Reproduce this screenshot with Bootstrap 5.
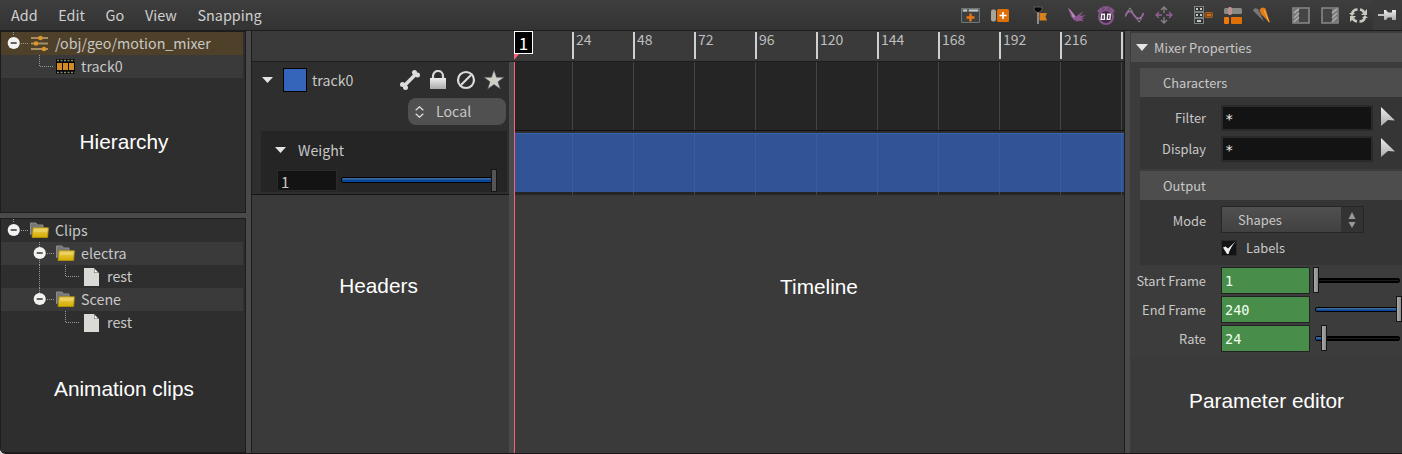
<!DOCTYPE html>
<html lang="en">
<head>
<meta charset="utf-8">
<meta name="viewport" content="width=device-width, initial-scale=1">
<title>Motion Mixer</title>
<link href="https://cdn.jsdelivr.net/npm/bootstrap@5.3.0/dist/css/bootstrap.min.css" rel="stylesheet">
<style>
html,body{height:100%}
body{background:#d8d8d8;color:#c8c8c8;font-family:"Noto Sans CJK SC","Noto Sans",sans-serif;font-size:14px;line-height:23px;overflow:hidden}
main{background:#3a3a3a;border-radius:0 0 0 6px;border-bottom:1px solid #1c1519;overflow:hidden}
svg{display:block;flex:none}
.topbar{height:31px;background:linear-gradient(#3e3e3e,#333);border-bottom:1px solid #1d1d1d;font-size:14.4px;line-height:30px}
.topbar .item{color:#d0d0d0;margin-right:20.7px;white-space:nowrap}
.tool{width:29px;height:30px;display:flex;align-items:center;justify-content:center;flex:none}
.pinned{background:#3b3b3b}
.leftcol{width:246px;flex:none;background:#4a4a4a}
.pane{background:#2e2e2e;border:1px solid #1d1d1d}
.pane-a{height:182px;padding-right:2px}
.pane-b{margin-top:5px;padding-right:2px}
.tree{height:23px;display:flex;align-items:center;font-size:14.3px;white-space:nowrap}
.tree span{line-height:21px;height:23px}
.sel{background:#4f4129}
.alt{background:#3a3a3a}
.split{width:5px;background:#4a4a4a;flex:none}
.caption{font-family:"Liberation Sans",Arial,sans-serif;font-size:20.8px;line-height:24px;color:#fff;text-align:center;white-space:nowrap}
.mid{width:874px;flex:none;border-left:1px solid #1d1d1d;border-right:1px solid #1d1d1d}
.ruler{height:31px;border-bottom:1px solid #1d1d1d;padding:1px 0 0 320px;overflow:hidden}
.tick{width:61px;height:27px;flex:none;border-left:2px solid #d0d0d0;padding-left:2px;line-height:15px;font-size:14px;color:#bebebe}
.headers{width:257px;flex:none}
.trackhead{height:133px;background:#2e2e2e;border-bottom:1px solid #161616}
.swatch{width:24px;height:24px;background:#3565ba;border:1px solid #000}
.local{width:98px;height:27px;border-radius:8px;background:#505050;margin-left:156px}
.weight{margin:6px 2px 0 9px;height:61px;background:#252525}
.field{background:#131313;border:1px solid #2b2b2b}
.timeline{position:relative;width:610px;flex:none}
.lanes{height:133px;background:#252525;position:relative;padding-left:58px;overflow:hidden}
.lane{width:61px;flex:none;height:133px;border-left:1px solid #444}
.clip-edge{position:absolute;left:0;right:0;top:68px;height:4px;background:#2e2e2e;border-top:1px solid #101010}
.clip{position:absolute;left:0;right:0;top:71px;height:59px;background:#315496;border-top:1px solid #3b63ae;padding-left:58px;overflow:hidden}
.clip .lane{border-color:#3b5da0}
.playline{position:absolute;left:262px;top:31px;bottom:0;width:1px;background:#ff6078;z-index:3}
.playflag{position:absolute;left:262px;top:0;z-index:4}
.playbox{width:19px;height:23px;background:#000;border:1px solid #fff;color:#fff;font-size:17px;line-height:21px;text-align:center}
.params{width:272px;font-size:12.85px;background:#3c3c3c;flex:none;padding:2px 0 0 1px}
.sect{height:29px;line-height:29px;background:#4f4f4f}
.sub{background:#4d4d4d;height:29px;line-height:29px;margin-left:9px;padding-left:23px}
.box{margin-left:9px;background:#353535}
.lab{text-align:right;white-space:nowrap;flex:none}
.inp{height:26px;background:#131313;border:2px solid #2a2a2a;font-family:"DejaVu Sans Mono","Liberation Mono",monospace;font-size:14px;line-height:24px;padding-left:2px;color:#eee;flex:none}
.grn{background:#488d49;border:1px solid #222;width:89px;height:27px;line-height:26px;color:#f0fff0;padding-left:3px;font-size:13.6px}
.menu{width:143px;height:27px;border:1px solid #262626;background:linear-gradient(#505050,#414141);flex:none}
.menu .arrows{width:22px;height:25px;background:#333}
.bar{height:5px;border:1px solid #000;background:linear-gradient(#000 1px,#1c1c1c 1px 2px,#000 2px);position:relative;border-radius:2px}
.bar.fill,.bar .part{background:linear-gradient(#42689a 0 1px,#05479a 2px)}
.knob{position:absolute;background:linear-gradient(90deg,#aaa,#888);border:1px solid #151515;width:6px;height:26px;top:-12px}
.rest{background:#3a3a3a}
</style>
</head>
<body class="d-flex flex-column m-0">
<svg width="0" height="0" class="position-absolute">
<defs>
<linearGradient id="gold" x1="0" y1="0" x2="0" y2="1"><stop offset="0" stop-color="#ebcf5a"/><stop offset="1" stop-color="#d4ac00"/></linearGradient>
<linearGradient id="silver" x1="0" y1="0" x2="0" y2="1"><stop offset="0" stop-color="#eee"/><stop offset="1" stop-color="#aaa"/></linearGradient>
<symbol id="minus" viewBox="0 0 13 13"><circle cx="6.5" cy="6.5" r="6.1" fill="#f2f2f0"/><path d="M3.5 6.5h6" stroke="#333" stroke-width="1.6"/></symbol>
<symbol id="folder" viewBox="0 0 19 17"><path d="M.5 13V1H6l1.500 2H13v3" fill="#777" stroke="#8c8c8c"/><path d="M2 15.500 3.200 5.800H18.400L17.600 15.500Z" fill="url(#gold)" stroke="#b99605" stroke-width=".8"/><path d="M4 7H17.500L17.200 10H3.500Z" fill="#eedb80" opacity=".5"/></symbol>
<symbol id="page" viewBox="0 0 15 18"><path d="M0 0h10l5 5v13H0Z" fill="#d9d9d6"/><path d="M10 0v5h5Z" fill="#555"/><path d="M10.500 1 14 4.600h-3.500Z" fill="#fff"/></symbol>
<symbol id="cursor" viewBox="0 0 16 21"><path d="M1 1 15 14.500 8 14 1 20Z" fill="url(#silver)"/></symbol>
</defs>
</svg>

<nav class="topbar d-flex flex-shrink-0">
  <div class="d-flex" style="width:956px;padding-left:11px">
    <span class="item">Add</span><span class="item">Edit</span><span class="item">Go</span><span class="item">View</span><span class="item">Snapping</span>
  </div>
  <div class="tool"><svg width="19" height="15" viewBox="0 0 19 15"><path d="M.5.5v14h18V.5Z" fill="#3c4042" stroke="#6c7675"/><path d="M1 2.500h17" stroke="#59605f" stroke-width="3"/><path d="M2 2.500h4m2 0h9" stroke="#c4c8c3" stroke-width="2"/><path d="M9.500 5.500v8M5.500 9.500h8" stroke="#ec780e" stroke-width="2.400"/></svg></div>
  <div class="tool"><svg width="18" height="13" viewBox="0 0 18 13"><rect x="0" y=".5" width="5" height="12" rx="2" fill="#a5a59c"/><rect x="6" y="0" width="12" height="13" rx="1.500" fill="#e07005"/><path d="M12 3v7M8.500 6.500h7" stroke="#fff" stroke-width="1.700"/></svg></div>
  <div class="tool" style="margin-left:12px"><svg width="16" height="18" viewBox="0 0 16 18"><path d="M1 1h8v3L6 6.500H4L1 4Z" fill="#080808" stroke="#777" stroke-width=".7"/><path d="M5 6.500V18" stroke="#aaa" stroke-width="1.500"/><path d="M6.500 7H14l-1.500 3.500L14 14.500H6.500Z" fill="#d7811c"/></svg></div>
  <div class="tool" style="margin-left:7px"><svg width="18" height="17" viewBox="0 0 18 17"><path d="M0 1 2.500 3 8 9.500 15.500 4 12 9l6-1-4.500 3 3.500.5-3.500.8 2.500 2.200-4-.8-3 .8-3-1.500-3-3.500Z" fill="#8d5790"/><path d="M0 1 2.500 3 7.500 9.500 5 11Q4 6 0 1Z" fill="#b58ab8"/></svg></div>
  <div class="tool"><svg width="18" height="19" viewBox="0 0 18 19"><path d="M1 6 5 2M17 6 13 2M9 1v4M5.500 1.500h7" stroke="#85568a" stroke-width="2.500"/><circle cx="9" cy="11" r="7" fill="#3f2b41" stroke="#85568a" stroke-width="2"/><path d="M4.800 8.200h2.600v5.200H4.200ZM10.800 8.200h2.600l-.6 5.200h-2.600Z" fill="none" stroke="#eee" stroke-width="1.400"/></svg></div>
  <div class="tool"><svg width="19" height="16" viewBox="0 0 19 16"><path d="M2.500 4.500 5 .8l2.500 3.700ZM11.500 11.500l2.500 3.700 2.500-3.700Z" fill="none" stroke="#888"/><path d="M0 9.500Q3 3 5.500 4.500C9 6 9.500 11.500 13.500 11.500Q17 11 18.500 6" fill="none" stroke="#996aa0" stroke-width="1.800"/></svg></div>
  <div class="tool"><svg width="18" height="18" viewBox="0 0 18 18" stroke="#8a8088" stroke-width="1.300" fill="none"><path d="M6 4l3-3 3 3M6 14l3 3 3-3M9 1v6M9 11v6"/><path stroke="#8e6295" d="M4 6 1 9l3 3M14 6l3 3-3 3M1 9h6M11 9h6"/></svg></div>
  <div class="tool" style="margin-left:11px"><svg width="19" height="18" viewBox="0 0 19 18"><g fill="#333" stroke="#7c8480"><rect x=".5" y=".5" width="9" height="5"/><rect x=".5" y="6.500" width="9" height="5"/><rect x=".5" y="12.500" width="9" height="5"/></g><path d="M2 3h2m2 0h2M2 9h2m2 0h2M3 15h4" stroke="#c8c8c5" stroke-width="2"/><rect x="11" y="6.500" width="7.500" height="5" rx="1" fill="#7c4c21" stroke="#a8601c"/><path d="M13 9h4" stroke="#e87b10" stroke-width="1.500"/></svg></div>
  <div class="tool"><svg width="18" height="17" viewBox="0 0 18 17"><rect x="0" y="1" width="18" height="6" rx="1.500" fill="#888985"/><path d="M6 0v8" stroke="#ddd" stroke-width="2.500"/><path d="M6 0v8" stroke="#d52b20"/><rect x="0" y="10" width="5" height="7" rx="1" fill="#ec7909"/><rect x="7" y="10" width="11" height="7" rx="1" fill="#e07005"/></svg></div>
  <div class="tool"><svg width="18" height="17" viewBox="0 0 18 17"><path d="M0 3.500Q1 0 5 2l6 12.500Z" fill="#777"/><path d="M6.500 3Q9-1 12.500 1.500L17 16 8 7Z" fill="#df7c18"/><path d="m11 3 5 12" stroke="#ffad51"/></svg></div>
  <div class="tool" style="margin-left:10px"><svg width="18" height="17" viewBox="0 0 18 17"><path d="M1 1h16v15H1Z" fill="#444" stroke="#888" stroke-width="1.600"/><path d="M2 2h5v13H2Z" fill="#777"/><path d="m2 6 5-4M2 11l5-5M2 15l5-5" stroke="#aaa" stroke-width="1.700"/></svg></div>
  <div class="tool"><svg width="18" height="17" viewBox="0 0 18 17"><path d="M1 1h16v15H1Z" fill="#444" stroke="#888" stroke-width="1.600"/><path d="M11 2h5v13h-5Z" fill="#777"/><path d="m11 6 5-4M11 11l5-5M11 15l5-5" stroke="#aaa" stroke-width="1.700"/></svg></div>
  <div class="tool"><svg width="19" height="17" viewBox="0 0 19 17"><g fill="none" stroke="#c8c8bd" stroke-width="2.600"><path d="M8.500 2.500Q4 2.500 3 7M10.500 14.500Q15 14.500 16 10M11 2.500q3 .5 4 3M8 14.500q-3-.5-4-3"/></g><path d="M18 2v6h-6ZM1 15V9h6ZM0 6h6L3 9ZM13 11h6l-3-3Z" fill="#c8c8bd"/></svg></div>
  <div class="tool pinned" style="width:28px"><svg width="19" height="14" viewBox="0 0 19 14"><path d="M0 7h7" stroke="#eee" stroke-width="1.500"/><path d="M6 2h2l2 2.500h4V2h4v10h-4V9.500h-4L8 12H6Z" fill="url(#silver)"/></svg></div>
</nav>

<main class="d-flex flex-grow-1">
  <aside class="leftcol d-flex flex-column">
    <section class="pane pane-a">
      <div class="tree sel"><svg width="29" height="23"><use href="#minus" x="6.200" y="4.500" width="13" height="13"/><path d="M12.500 0v4M20 11.500h7" stroke="#999" stroke-dasharray="1 1"/></svg><svg width="17" height="17" viewBox="0 0 17 17" style="margin-left:1px"><path d="M0 3h17M0 8.500h17M0 14h17" stroke="#a58e62" stroke-width="2"/><g fill="#df9628"><circle cx="9.500" cy="3" r="2.300"/><circle cx="5" cy="8.500" r="2.300"/><circle cx="13" cy="14" r="2.300"/></g></svg><span style="margin-left:7px">/obj/geo/motion_mixer</span></div>
      <div class="tree alt"><svg width="55" height="23"><path d="M38.500 0v11.500h14" fill="none" stroke="#999" stroke-dasharray="1 1"/></svg><svg width="19" height="15" viewBox="0 0 19 15"><path d="M0 0h19v15H0Z" fill="#090909"/><path d="M1 1.500h18M1 13.500h18" stroke="#8a8a72" stroke-dasharray="2 1.500" stroke-width="1.500"/><path d="M1 4h5v7H1ZM7 4h5v7H7ZM13 4h5v7h-5Z" fill="#d38a23"/></svg><span style="margin-left:6px">track0</span></div>
      <div class="caption" style="margin-top:52px;padding-left:4px">Hierarchy</div>
    </section>
    <section class="pane pane-b flex-grow-1">
      <div class="tree"><svg width="29" height="23"><use href="#minus" x="6.200" y="4.500" width="13" height="13"/><path d="M12.500 0v4M20 11.500h7" stroke="#999" stroke-dasharray="1 1"/></svg><svg width="19" height="17"><use href="#folder"/></svg><span style="margin-left:6px">Clips</span></div>
      <div class="tree alt"><svg width="55" height="23"><path d="M38.500 0v23M46 11.500h7" stroke="#999" stroke-dasharray="1 1"/><use href="#minus" x="32.200" y="4.500" width="13" height="13"/></svg><svg width="19" height="17"><use href="#folder"/></svg><span style="margin-left:6px">electra</span></div>
      <div class="tree"><svg width="83" height="23"><path d="M38.500 0v23M64.500 0v11.500h14" fill="none" stroke="#999" stroke-dasharray="1 1"/></svg><svg width="15" height="18"><use href="#page"/></svg><span style="margin-left:8px">rest</span></div>
      <div class="tree alt"><svg width="55" height="23"><path d="M38.500 0v8M46 11.500h7" stroke="#999" stroke-dasharray="1 1"/><use href="#minus" x="32.200" y="4.500" width="13" height="13"/></svg><svg width="19" height="17"><use href="#folder"/></svg><span style="margin-left:6px">Scene</span></div>
      <div class="tree"><svg width="83" height="23"><path d="M64.500 0v11.500h14" fill="none" stroke="#999" stroke-dasharray="1 1"/></svg><svg width="15" height="18"><use href="#page"/></svg><span style="margin-left:8px">rest</span></div>
      <div class="caption" style="margin-top:43px;padding-left:4px">Animation clips</div>
    </section>
  </aside>
  <div class="split"></div>

  <section class="mid position-relative">
    <div class="ruler d-flex">
      <div class="tick">24</div><div class="tick">48</div><div class="tick">72</div><div class="tick">96</div><div class="tick">120</div><div class="tick">144</div><div class="tick">168</div><div class="tick">192</div><div class="tick">216</div><div class="tick"></div>
    </div>
    <div class="d-flex" style="height:391px">
      <div class="headers">
        <div class="trackhead">
          <div class="d-flex align-items-center" style="height:36px;padding-left:10px">
            <svg width="11" height="7"><path d="M0 0h11L5.500 6Z" fill="#e4e4e4"/></svg>
            <div class="swatch" style="margin-left:10px"></div>
            <span style="margin-left:5px;width:87px;font-size:14.200px;line-height:22px">track0</span>
            <svg width="22" height="22" viewBox="0 0 22 22"><path d="M6 16 16 6" stroke="#dcdcdc" stroke-width="3.500"/><g fill="#dcdcdc"><circle cx="3.500" cy="15.500" r="2.500"/><circle cx="6.500" cy="18.500" r="2.500"/><circle cx="15.500" cy="3.500" r="2.500"/><circle cx="18.500" cy="6" r="2.500"/></g></svg>
            <svg width="20" height="20" viewBox="0 0 20 20" style="margin-left:7px"><path d="M5 9V6a5 5 0 0 1 10 0v3" fill="none" stroke="#d8d8d8" stroke-width="2.200"/><path d="M2 8h16v11H2Z" fill="url(#silver)"/></svg>
            <svg width="20" height="20" viewBox="0 0 20 20" style="margin-left:8px"><circle cx="10" cy="10" r="8" fill="none" stroke="#dcdcdc" stroke-width="2.200"/><path d="M5 15 15 5" stroke="#dcdcdc" stroke-width="2.200"/></svg>
            <svg width="20" height="20" viewBox="0 0 20 20" style="margin-left:8px"><path d="m10 0 2.500 7.300H20l-6 4.500 2.300 7.200-6.300-4.500L3.700 19 6 11.800 0 7.300h7.500Z" fill="#cfcfc8" stroke="#48535a" stroke-width=".6"/></svg>
          </div>
          <div class="local d-flex align-items-center"><svg width="9" height="12" viewBox="0 0 9 12" style="margin-left:7px"><path d="M.7 4.300 4.500.7l3.800 3.600M.7 7.700l3.800 3.600 3.800-3.600" fill="none" stroke="#e0e0e0" stroke-width="1.200"/></svg><span style="margin-left:12px;font-size:14.200px">Local</span></div>
          <div class="weight">
            <div class="d-flex align-items-center" style="height:39px;padding-left:14px"><svg width="11" height="7"><path d="M0 0h11L5.500 6Z" fill="#e4e4e4"/></svg><span style="margin-left:12px;font-size:14.200px;line-height:21px">Weight</span></div>
            <div class="d-flex" style="padding-left:16px"><div class="field" style="width:60px;height:21px;padding-left:3px;line-height:21px;font-size:15px">1</div><div class="bar fill" style="width:153px;height:6px;margin:7px 0 0 4px"><div class="knob" style="left:149px;top:-9px;height:23px;background:#555"></div></div></div>
          </div>
        </div>
        <div class="caption" style="margin-top:79px;padding-right:4px">Headers</div>
      </div>
      <div class="split"></div>
      <div class="timeline">
        <div class="lanes d-flex">
          <div class="lane"></div><div class="lane"></div><div class="lane"></div><div class="lane"></div><div class="lane"></div><div class="lane"></div><div class="lane"></div><div class="lane"></div><div class="lane"></div><div class="lane"></div>
          <div class="clip-edge"></div>
          <div class="clip d-flex"><div class="lane"></div><div class="lane"></div><div class="lane"></div><div class="lane"></div><div class="lane"></div><div class="lane"></div><div class="lane"></div><div class="lane"></div><div class="lane"></div><div class="lane"></div></div>
        </div>
        <div class="caption" style="margin-top:80px">Timeline</div>
      </div>
    </div>
    <div class="playline"></div>
    <div class="playflag"><div class="playbox">1</div><svg width="5" height="6"><path d="M0 0h5L0 6Z" fill="#ff6078"/></svg></div>
  </section>
  <div class="split"></div>

  <aside class="params">
    <div class="sect d-flex align-items-center"><svg width="12" height="8" style="margin-left:5px"><path d="M0 0h12L6 7Z" fill="#e4e4e4"/></svg><span style="margin-left:6px">Mixer Properties</span></div>
    <div class="sub" style="margin-top:6px">Characters</div>
    <div class="box" style="height:72px;padding-top:8px">
      <div class="d-flex" style="height:31px"><span class="lab" style="width:66px;line-height:26px">Filter</span><div class="inp" style="width:152px;margin-left:15px">*</div><svg width="16" height="21" style="margin:1px 0 0 7px"><use href="#cursor"/></svg></div>
      <div class="d-flex"><span class="lab" style="width:66px;line-height:26px">Display</span><div class="inp" style="width:152px;margin-left:15px">*</div><svg width="16" height="21" style="margin:1px 0 0 7px"><use href="#cursor"/></svg></div>
    </div>
    <div class="sub" style="margin-top:2px">Output</div>
    <div class="box" style="height:65px;padding-top:6px">
      <div class="d-flex" style="height:34px"><span class="lab" style="width:66px;line-height:30px">Mode</span><div class="menu d-flex" style="margin-left:15px"><span class="flex-grow-1" style="padding-left:16px;line-height:26px">Shapes</span><div class="arrows d-flex align-items-center justify-content-center"><svg width="8" height="18"><path d="M4 1 7.500 8h-7ZM4 17 7.500 11h-7Z" fill="#999"/></svg></div></div></div>
      <div class="d-flex"><svg width="16" height="16" style="margin-left:81px"><rect x=".5" y=".5" width="15" height="15" fill="#131313" stroke="#2a2a2a"/><path d="M2 7.500 4.500 6.500 7 8.500 15 1Q9.500 7 7.500 14H6Z" fill="#eee"/></svg><span style="margin-left:9px;line-height:16px">Labels</span></div>
    </div>
    <div class="d-flex" style="margin-top:2px;height:29px"><span class="lab" style="width:75px;line-height:28px">Start Frame</span><div class="inp grn" style="margin-left:15px">1</div><div class="bar" style="width:85px;margin:11px 0 0 5px"><div class="knob" style="left:-3px"></div></div></div>
    <div class="d-flex" style="height:29px"><span class="lab" style="width:75px;line-height:28px">End Frame</span><div class="inp grn" style="margin-left:15px">240</div><div class="bar fill" style="width:85px;margin:11px 0 0 5px"><div class="knob" style="left:80px"></div></div></div>
    <div class="d-flex" style="height:32px"><span class="lab" style="width:75px;line-height:28px">Rate</span><div class="inp grn" style="margin-left:15px">24</div><div class="bar" style="width:85px;margin:11px 0 0 5px"><div class="part" style="width:6px;height:3px"></div><div class="knob" style="left:5px"></div></div></div>
    <div class="rest" style="height:96px;padding-top:32px"><div class="caption">Parameter editor</div></div>
  </aside>
</main>
<script src="https://cdn.jsdelivr.net/npm/bootstrap@5.3.0/dist/js/bootstrap.bundle.min.js"></script>
</body>
</html>
